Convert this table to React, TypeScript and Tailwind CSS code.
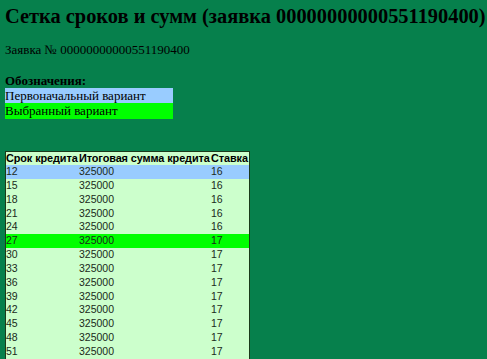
import React from "react";

const rows: [number, number, number, string?][] = [
  [12, 325000, 16, "blue"],
  [15, 325000, 16],
  [18, 325000, 16],
  [21, 325000, 16],
  [24, 325000, 16],
  [27, 325000, 17, "green"],
  [30, 325000, 17],
  [33, 325000, 17],
  [36, 325000, 17],
  [39, 325000, 17],
  [42, 325000, 17],
  [45, 325000, 17],
  [48, 325000, 17],
  [51, 325000, 17],
];

export default function App() {
  return (
    <div
      className="w-[487px] h-[359px] overflow-hidden bg-[#06804c] text-black pl-[5px]"
      style={{ fontFamily: '"Liberation Serif", serif' }}
    >
      <h1 className="pt-[5px] text-[20.4px] font-bold leading-[22px] whitespace-nowrap">
        Сетка сроков и сумм (заявка 00000000000551190400)
      </h1>
      <p className="mt-[15px] text-[13px] leading-[15px]">Заявка № 00000000000551190400</p>
      <p className="mt-[16px] text-[13px] leading-[15px] font-bold">Обозначения:</p>
      <div className="w-[168px] text-[13px] leading-[15px]">
        <div className="bg-[#99ccff] h-[15px]">Первоначальный вариант</div>
        <div className="bg-[#00ff00] h-[16px]">Выбранный вариант</div>
      </div>
      <div
        className="mt-[32px] w-[245px] border border-[#1a3a1a] bg-[#ccffcc] text-[10.5px] text-[#1a2a1a] whitespace-nowrap"
        style={{ fontFamily: '"Liberation Sans", sans-serif' }}
      >
        <div className="grid grid-cols-[73px_132px_1fr] h-[13px] leading-[13px] font-bold text-[10.9px] tracking-[-0.1px] text-black">
          <div>Срок кредита</div>
          <div>Итоговая сумма кредита</div>
          <div>Ставка</div>
        </div>
        {rows.map(([t, s, r, c]) => (
          <div
            key={t}
            className={
              "grid grid-cols-[73px_132px_1fr] h-[13.85px] leading-[13.85px] " +
              (c === "blue" ? "bg-[#99ccff]" : c === "green" ? "bg-[#00ff00]" : "")
            }
          >
            <div>{t}</div>
            <div>{s}</div>
            <div>{r}</div>
          </div>
        ))}
      </div>
    </div>
  );
}
